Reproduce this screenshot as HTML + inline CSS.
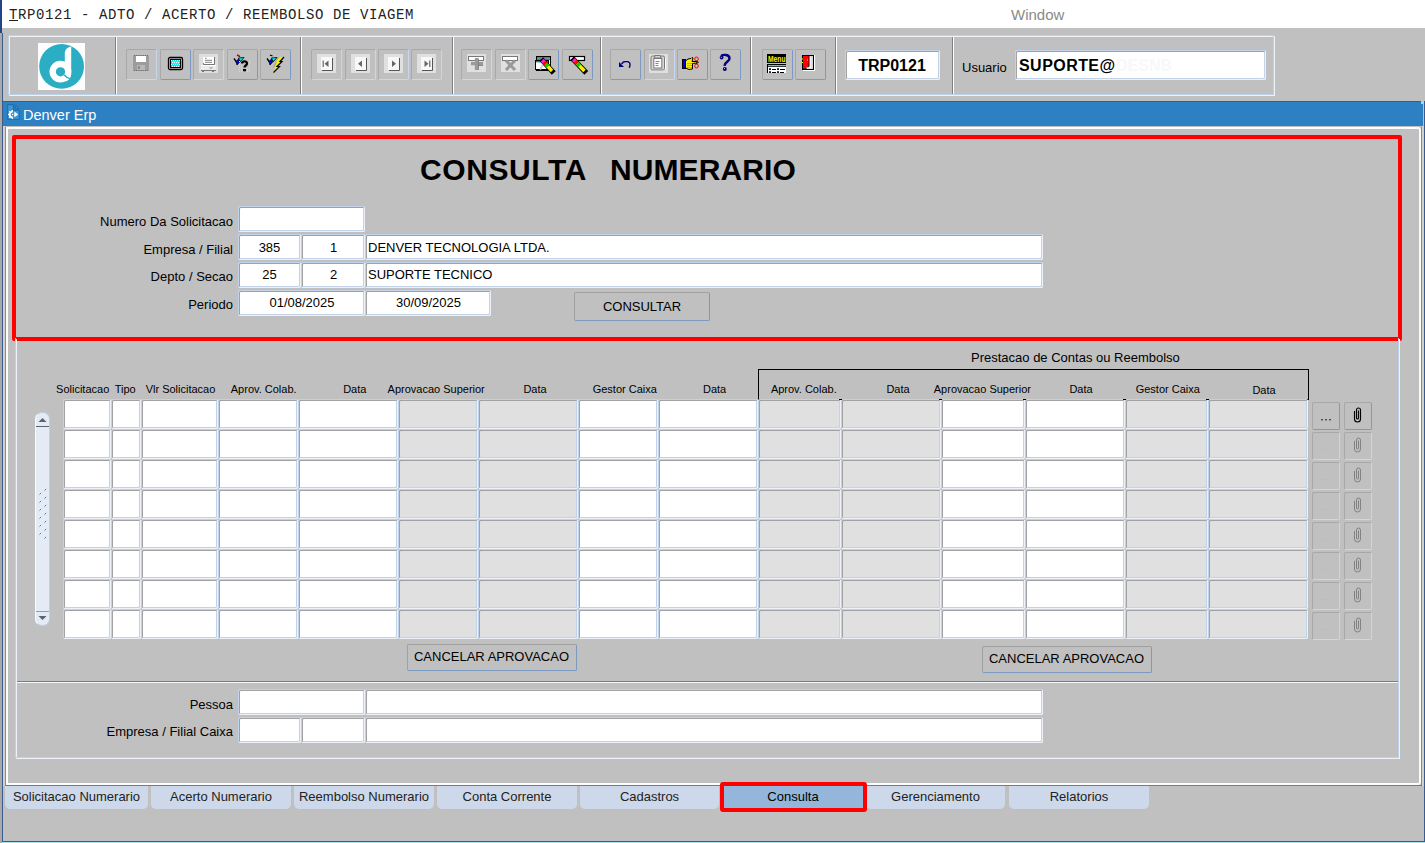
<!DOCTYPE html><html><head><meta charset="utf-8"><title>TRP0121</title><style>
*{margin:0;padding:0;box-sizing:border-box}
html,body{width:1425px;height:843px;overflow:hidden;background:#c0c0c0;position:relative}
.t{position:absolute;white-space:pre;line-height:normal}
.b{position:absolute}
.f,.fd{position:absolute;background:#fff;border:1px solid;border-color:#c2d3e9 #edf2f9 #edf2f9 #c2d3e9;border-radius:2px;box-shadow:inset 1px 1px 0 #a2a2a2, inset -1px -1px 0 #c2d3e9}
.fd{background:#e0e0e0}
.tb{position:absolute;top:49px;width:31px;height:31px;border:1px solid #a8a8a8;border-right-color:#c6d8ef;border-bottom-color:#c6d8ef;border-radius:2px}
.tb.e{border-right-color:#7a9ac2;border-bottom-color:#7a9ac2}
.tb svg{position:absolute;left:0;top:0}
.btn{position:absolute;border:1px solid #a0a0a0;border-right-color:#7a9ac2;border-bottom-color:#7a9ac2;border-radius:2px}
.tab{position:absolute;top:786px;height:23px;width:140px;background:#cdd9ea;border-radius:0 0 5px 5px;font-family:"Liberation Sans",sans-serif;font-size:13px;text-align:center;line-height:21px;color:#222}
</style></head><body>
<div class="b" style="left:2px;top:0px;width:1423px;height:28px;background:#fff"></div>
<div class="b" style="left:0px;top:0px;width:2px;height:33px;background:#1f4588"></div>
<div class="b" style="left:0px;top:33px;width:1px;height:810px;background:#c8c8c8"></div>
<div class="b" style="left:1px;top:33px;width:1px;height:810px;background:#9a9a9a"></div>
<div class="t" style="left:9px;top:7px;font-size:14px;font-weight:normal;color:#222;font-family:'Liberation Mono', monospace;letter-spacing:0.6px"><u>T</u>RP0121 - ADTO / ACERTO / REEMBOLSO DE VIAGEM</div>
<div class="t" style="left:1011px;top:6px;font-size:15px;font-weight:normal;color:#8a8a8a;font-family:'Liberation Sans', sans-serif;">Window</div>
<div class="b" style="left:9px;top:36px;width:1266px;height:60px;border:1px solid #eef3fa"></div>
<div class="b" style="left:8px;top:35px;width:1266px;height:60px;border:1px solid #bcd0ea"></div>
<div class="b" style="left:115px;top:37px;width:1px;height:57px;background:#808080"></div>
<div class="b" style="left:116px;top:37px;width:1px;height:57px;background:#fff"></div>
<div class="b" style="left:300px;top:37px;width:1px;height:57px;background:#808080"></div>
<div class="b" style="left:301px;top:37px;width:1px;height:57px;background:#fff"></div>
<div class="b" style="left:452px;top:37px;width:1px;height:57px;background:#808080"></div>
<div class="b" style="left:453px;top:37px;width:1px;height:57px;background:#fff"></div>
<div class="b" style="left:600px;top:37px;width:1px;height:57px;background:#808080"></div>
<div class="b" style="left:601px;top:37px;width:1px;height:57px;background:#fff"></div>
<div class="b" style="left:750px;top:37px;width:1px;height:57px;background:#808080"></div>
<div class="b" style="left:751px;top:37px;width:1px;height:57px;background:#fff"></div>
<div class="b" style="left:835px;top:37px;width:1px;height:57px;background:#808080"></div>
<div class="b" style="left:836px;top:37px;width:1px;height:57px;background:#fff"></div>
<div class="b" style="left:952px;top:37px;width:1px;height:57px;background:#808080"></div>
<div class="b" style="left:953px;top:37px;width:1px;height:57px;background:#fff"></div>
<svg class="b" style="left:38px;top:43px" width="47" height="47" viewBox="0 0 47 47">
<rect width="47" height="47" fill="#fdfdfd"/>
<circle cx="23.6" cy="23.4" r="22.4" fill="#2badc3"/>
<circle cx="22.4" cy="28.6" r="10.9" fill="#fff"/>
<path d="M26.8 31 V9.5 C27.5 6 30 4.2 33.2 3.6 V31 C33.2 34.5 31 37 28 38.5 L25 33 Z" fill="#fff"/>
<circle cx="22.5" cy="28.8" r="4.65" fill="#2badc3"/>
<path d="M26 31.8 C27.8 34 29.5 35 32 35.6" stroke="#2badc3" stroke-width="1.4" fill="none"/>
</svg>
<div class="tb" style="left:126px"><svg width="31" height="31" viewBox="0 0 31 31" style="left:-1px;top:-1px"><rect x="7" y="6" width="16" height="16" rx="1.5" fill="#9c9c9c"/><path d="M8 6.5h14M8 21.5h14" stroke="#666" stroke-width="1" stroke-dasharray="1 1.2"/><rect x="10" y="7" width="10" height="6" fill="#fff"/><rect x="11" y="16" width="8" height="5" fill="#b8b8b8"/><rect x="12" y="17" width="2" height="3" fill="#8a8a8a"/></svg></div>
<div class="tb e" style="left:160px"><svg width="31" height="31" viewBox="0 0 31 31" style="left:-1px;top:-1px"><rect x="8.5" y="8.5" width="14" height="12" rx="1.5" fill="#c8c8c8" stroke="#000" stroke-width="1.3"/><rect x="10.5" y="10.5" width="10" height="8" fill="#00f0f8" stroke="#000" stroke-width="1.1"/><g fill="#fff"><rect x="11" y="11" width="1" height="1"/><rect x="13" y="11" width="1" height="1"/><rect x="15" y="11" width="1" height="1"/><rect x="17" y="11" width="1" height="1"/><rect x="19" y="11" width="1" height="1"/><rect x="12" y="13" width="1" height="1"/><rect x="14" y="13" width="1" height="1"/><rect x="16" y="13" width="1" height="1"/><rect x="18" y="13" width="1" height="1"/><rect x="11" y="15" width="1" height="1"/><rect x="13" y="15" width="1" height="1"/><rect x="15" y="15" width="1" height="1"/><rect x="17" y="15" width="1" height="1"/><rect x="19" y="15" width="1" height="1"/><rect x="12" y="17" width="1" height="1"/><rect x="14" y="17" width="1" height="1"/><rect x="16" y="17" width="1" height="1"/><rect x="18" y="17" width="1" height="1"/></g><path d="M12 12.5h6M12 14.5h7" stroke="#bbb" stroke-width="0.8"/></svg></div>
<div class="tb" style="left:193px"><svg width="31" height="31" viewBox="0 0 31 31" style="left:-1px;top:-1px"><rect x="6" y="5" width="19" height="19" fill="#dedede"/><rect x="10" y="8" width="11" height="7" fill="#fff"/><path d="M10.5 14 V15.5 H21.5 V8" stroke="#777" stroke-width="1" fill="none"/><path d="M12 9.3h1.5M12 11.3h7M12 13.3h7" stroke="#777" stroke-width="0.9"/><rect x="8" y="16" width="15" height="5" fill="#ececec"/><path d="M8 16.5h15" stroke="#fff" stroke-width="1"/><path d="M16.5 19h3" stroke="#888" stroke-width="1"/><path d="M8 21.5h15" stroke="#777" stroke-width="1"/><path d="M9 22.5h2M19 22.5h2" stroke="#777" stroke-width="1"/></svg></div>
<div class="tb e" style="left:227px"><svg width="31" height="31" viewBox="0 0 31 31" style="left:-1px;top:-1px"><path d="M7 9.5 L9.5 13" stroke="#000" stroke-width="1.3"/><path d="M9 12.5 L12 9.5 L13.5 12 L10 16 Z" fill="#0000f0" stroke="#000" stroke-width="0.8"/><path d="M11.5 9 L17 8.5 L14 12 L12.8 12.3 Z" fill="#00f0f0" stroke="#000" stroke-width="0.8"/><path d="M10 6 L13 7.5" stroke="#000" stroke-width="1.3"/><circle cx="11.2" cy="6.4" r="0.9" fill="#f00"/><rect x="12" y="12" width="1" height="1" fill="#ffee00"/><rect x="12" y="14" width="1" height="1" fill="#ffee00"/><rect x="12" y="16" width="1" height="1" fill="#ffee00"/><rect x="12" y="18" width="1" height="1" fill="#ffee00"/><rect x="12" y="20" width="1" height="1" fill="#ffee00"/><rect x="12" y="22" width="1" height="1" fill="#ffee00"/><rect x="14" y="12" width="1" height="1" fill="#ffee00"/><rect x="14" y="14" width="1" height="1" fill="#ffee00"/><rect x="14" y="16" width="1" height="1" fill="#ffee00"/><rect x="14" y="18" width="1" height="1" fill="#ffee00"/><rect x="14" y="20" width="1" height="1" fill="#ffee00"/><rect x="14" y="22" width="1" height="1" fill="#ffee00"/><rect x="16" y="22" width="1" height="1" fill="#ffee00"/><rect x="18" y="22" width="1" height="1" fill="#ffee00"/><rect x="20" y="20" width="1" height="1" fill="#ffee00"/><rect x="20" y="22" width="1" height="1" fill="#ffee00"/><rect x="22" y="12" width="1" height="1" fill="#ffee00"/><rect x="22" y="14" width="1" height="1" fill="#ffee00"/><rect x="22" y="16" width="1" height="1" fill="#ffee00"/><rect x="22" y="18" width="1" height="1" fill="#ffee00"/><rect x="22" y="20" width="1" height="1" fill="#ffee00"/><rect x="22" y="22" width="1" height="1" fill="#ffee00"/><path d="M15 14.5 C15 12 20 11.5 20 14.5 C20 16.5 17.5 16.5 17.5 18.5" stroke="#000" stroke-width="2.3" fill="none"/><rect x="16" y="20" width="3" height="2.3" fill="#000"/></svg></div>
<div class="tb e" style="left:260px"><svg width="31" height="31" viewBox="0 0 31 31" style="left:-1px;top:-1px"><path d="M7 9.5 L9.5 13" stroke="#000" stroke-width="1.3"/><path d="M9 12.5 L12 9.5 L13.5 12 L10 16 Z" fill="#0000f0" stroke="#000" stroke-width="0.8"/><path d="M11.5 9 L17 8.5 L14 12 L12.8 12.3 Z" fill="#00f0f0" stroke="#000" stroke-width="0.8"/><path d="M10 6 L12.5 7" stroke="#000" stroke-width="1.3"/><path d="M19 8.5 L24 8 L20 12.5 L22 12.5 L17 17.5 L19.5 17.5 L13.5 23.5 L15.5 18.5 L13.5 18.5 L16.5 13.5 L14.5 13.5 Z" fill="#ffee00"/><path d="M24 8 L20 12.5 L22 12.5 L17 17.5 L19.5 17.5 L13.5 23.5" stroke="#000" stroke-width="1.2" fill="none"/><path d="M19 8.5 L14.5 13.5 M16.5 13.5 L13.5 18.5" stroke="#8a8aa0" stroke-width="0.8" fill="none"/></svg></div>
<div class="tb" style="left:311px"><svg width="31" height="31" viewBox="0 0 31 31" style="left:-1px;top:-1px"><rect x="6" y="5" width="19" height="19" fill="#e0e0e0"/><rect x="10" y="8" width="11" height="13" fill="#f8f8f8"/><path d="M11 21.5 H21.5 V9" stroke="#555" stroke-width="1" fill="none"/><path d="M12.2 11.5v6.5" stroke="#666" stroke-width="1.2"/><path d="M17.5 11.5 L13.5 14.7 L17.5 18 Z" fill="#666"/></svg></div>
<div class="tb" style="left:345px"><svg width="31" height="31" viewBox="0 0 31 31" style="left:-1px;top:-1px"><rect x="6" y="5" width="19" height="19" fill="#e0e0e0"/><rect x="10" y="8" width="11" height="13" fill="#f8f8f8"/><path d="M11 21.5 H21.5 V9" stroke="#555" stroke-width="1" fill="none"/><path d="M17 11.5 L13 14.7 L17 18 Z" fill="#666"/></svg></div>
<div class="tb" style="left:378px"><svg width="31" height="31" viewBox="0 0 31 31" style="left:-1px;top:-1px"><rect x="6" y="5" width="19" height="19" fill="#e0e0e0"/><rect x="10" y="8" width="11" height="13" fill="#f8f8f8"/><path d="M11 21.5 H21.5 V9" stroke="#555" stroke-width="1" fill="none"/><path d="M14 11.5 L18 14.7 L14 18 Z" fill="#666"/></svg></div>
<div class="tb" style="left:411px"><svg width="31" height="31" viewBox="0 0 31 31" style="left:-1px;top:-1px"><rect x="6" y="5" width="19" height="19" fill="#e0e0e0"/><rect x="10" y="8" width="11" height="13" fill="#f8f8f8"/><path d="M11 21.5 H21.5 V9" stroke="#555" stroke-width="1" fill="none"/><path d="M13.5 11.5 L17.5 14.7 L13.5 18 Z" fill="#666"/><path d="M18.8 11.5v6.5" stroke="#666" stroke-width="1.2"/></svg></div>
<div class="tb" style="left:461px"><svg width="31" height="31" viewBox="0 0 31 31" style="left:-1px;top:-1px"><rect x="6" y="5" width="19" height="18" fill="#e0e0e0"/><rect x="7.5" y="7.5" width="15" height="4" fill="#fff" stroke="#777" stroke-width="1"/><path d="M15.5 9 V21 M10 14.7 H22" stroke="#999" stroke-width="3.3"/><path d="M17.5 9.5 V21 M17 16.5 H22" stroke="#777" stroke-width="0.8"/></svg></div>
<div class="tb" style="left:495px"><svg width="31" height="31" viewBox="0 0 31 31" style="left:-1px;top:-1px"><rect x="6" y="5" width="19" height="18" fill="#e0e0e0"/><rect x="7.5" y="7.5" width="15" height="4" fill="#fff" stroke="#777" stroke-width="1"/><path d="M11 11.5 L20 21 M20 11.5 L11 21" stroke="#999" stroke-width="3"/></svg></div>
<div class="tb e" style="left:528px"><svg width="31" height="31" viewBox="0 0 31 31" style="left:-1px;top:-1px"><rect x="8.5" y="7.5" width="14" height="14" fill="#fff" stroke="#000" stroke-width="1"/><path d="M9 8.8h13" stroke="#008888" stroke-width="1.3"/><path d="M9 10.2h13" stroke="#000" stroke-width="0.8"/><rect x="7.5" y="11.5" width="13" height="9" fill="#fff" stroke="#000" stroke-width="1"/><path d="M8 12.7h12" stroke="#008888" stroke-width="1.3"/><path d="M12 20.5 L15 16" stroke="#d0d0d0" stroke-width="2"/><path d="M15 12 L24 22" stroke="#000" stroke-width="5.2" stroke-linecap="square"/><path d="M15 12 L24 22" stroke="#ffee00" stroke-width="3.4"/><path d="M14.3 11.2 L18 15.3" stroke="#ff0000" stroke-width="3.6"/><path d="M14.3 11.2 L16 13" stroke="#ff20f0" stroke-width="3.6"/><path d="M18 15.3 L20 17.5" stroke="#00d000" stroke-width="3.6"/></svg></div>
<div class="tb e" style="left:562px"><svg width="31" height="31" viewBox="0 0 31 31" style="left:-1px;top:-1px"><rect x="7.5" y="7.5" width="15" height="4" fill="#fff" stroke="#000" stroke-width="1.2"/><path d="M12 11 L22.5 22" stroke="#000" stroke-width="5.2" stroke-linecap="square"/><path d="M12 11 L22.5 22" stroke="#ffee00" stroke-width="3.4"/><path d="M11.5 10.5 L15.5 14.5" stroke="#ff0000" stroke-width="3.6"/><path d="M11.5 10.5 L13.2 12.2" stroke="#ff20f0" stroke-width="3.6"/><path d="M15.5 14.5 L17.7 16.8" stroke="#00d000" stroke-width="3.6"/></svg></div>
<div class="tb e" style="left:610px"><svg width="31" height="31" viewBox="0 0 31 31" style="left:-1px;top:-1px"><path d="M9 13 L9 18 L14 18 Z" fill="#000080"/><path d="M11.5 15 L13.5 13 L15.5 12.6 H18 L19.8 14 L20 16.2 L19.3 18.8" stroke="#000080" stroke-width="1.4" fill="none"/></svg></div>
<div class="tb" style="left:644px"><svg width="31" height="31" viewBox="0 0 31 31" style="left:-1px;top:-1px"><rect x="5" y="5" width="19" height="19" fill="#dfdfdf"/><path d="M9 21.5 H20 M21.5 9 V20" stroke="#fff" stroke-width="1"/><rect x="7" y="7" width="13.5" height="14" rx="1.5" fill="#d6d6d6" stroke="#777" stroke-width="1"/><rect x="9.8" y="9.5" width="8" height="9.5" fill="#fff" stroke="#777" stroke-width="1"/><path d="M11 6.5 H16 L17 8.5 L17.5 9 H10 L10.5 8.5 Z" fill="#d6d6d6" stroke="#777" stroke-width="1"/><path d="M11.5 12.5h4M11.5 14.5h3M11.5 16.5h3" stroke="#777" stroke-width="0.9"/></svg></div>
<div class="tb e" style="left:677px"><svg width="31" height="31" viewBox="0 0 31 31" style="left:-1px;top:-1px"><rect x="5.5" y="10.5" width="3" height="9" fill="#0000f0" stroke="#000" stroke-width="1"/><path d="M8.5 12 L11 10 L14 9.5 L15 8.5 L16 9 L15 12.5 L20 12.5 L20 14 L15.5 14.5 L15.5 20 L12 20.5 L8.5 19 Z" fill="#ffee00" stroke="#000" stroke-width="1"/><path d="M10 14.5h5M10 16.5h5M10 18.5h5" stroke="#a09000" stroke-width="0.6"/><ellipse cx="19.5" cy="10" rx="1.8" ry="2" fill="none" stroke="#f00" stroke-width="1"/><ellipse cx="19.5" cy="17" rx="1.8" ry="2" fill="none" stroke="#f00" stroke-width="1"/><path d="M19 12 L21.5 13.3 L19 15" stroke="#000" stroke-width="0.8" fill="none"/></svg></div>
<div class="tb e" style="left:710px"><svg width="31" height="31" viewBox="0 0 31 31" style="left:-1px;top:-1px"><circle cx="11.6" cy="8.6" r="1.9" fill="#000080"/><circle cx="11.3" cy="8.3" r="0.5" fill="#fff"/><path d="M11 7 C13 5.5 19.5 5 19.5 9.5 C19.5 12.5 15 12.5 14.5 16.8" stroke="#000080" stroke-width="2.4" fill="none"/><circle cx="14.8" cy="20" r="2" fill="#000080"/><circle cx="14.5" cy="19.6" r="0.5" fill="#fff"/></svg></div>
<div class="tb e" style="left:762px"><svg width="31" height="31" viewBox="0 0 31 31" style="left:-1px;top:-1px"><rect x="5" y="5" width="19" height="9" fill="#000"/><text x="6" y="12.6" font-family="Liberation Sans" font-weight="bold" font-size="9" fill="#ffee00" textLength="17.5" lengthAdjust="spacingAndGlyphs">Menu</text><rect x="5" y="15" width="19" height="1" fill="#000"/><rect x="6" y="16" width="18" height="1.3" fill="#00f0f0"/><rect x="5" y="17.3" width="19" height="0.9" fill="#000"/><rect x="6" y="18" width="18" height="6" fill="#fff"/><rect x="5" y="15" width="1" height="9" fill="#000"/><g fill="#000"><rect x="7" y="19.3" width="2" height="1.6"/><rect x="7" y="22.3" width="2" height="1.6"/><rect x="15" y="19.3" width="2" height="1.6"/><rect x="15" y="22.3" width="2" height="1.6"/><rect x="10" y="20" width="4" height="1"/><rect x="10" y="23" width="4" height="1"/><rect x="18" y="20" width="5" height="1"/><rect x="18" y="23" width="4" height="1"/></g></svg></div>
<div class="tb e" style="left:795px"><svg width="31" height="31" viewBox="0 0 31 31" style="left:-1px;top:-1px"><path d="M19.5 6 V21.5 H8" stroke="#fff" stroke-width="1.2" fill="none"/><rect x="7.5" y="6.5" width="11" height="14" fill="#d8d8d8" stroke="#000" stroke-width="1"/><path d="M8 7 H14 V17 L13 17 L13 18 L11 18 L11 19 L8 19 Z" fill="#ff0000"/><path d="M14 7 V17.5 H13.5 V18.5 H11.5 V19.5 H8" stroke="#000" stroke-width="0.8" fill="none"/><path d="M15.8 8 V18.8 H11.5" stroke="#fff" stroke-width="0.9" fill="none"/><rect x="12" y="10.5" width="1" height="1" fill="#ff0"/><rect x="7" y="9.5" width="1" height="1" fill="#ff0"/><rect x="7" y="13" width="1" height="1" fill="#ff0"/></svg></div>
<div class="f" style="left:845px;top:50px;width:95px;height:30px"></div>
<div class="t" style="left:845.5px;width:93px;text-align:center;top:57px;font-size:16px;font-weight:bold;color:#000;font-family:'Liberation Sans', sans-serif;">TRP0121</div>
<div class="t" style="left:962px;top:60px;font-size:13px;font-weight:normal;color:#000;font-family:'Liberation Sans', sans-serif;">Usuario</div>
<div class="f" style="left:1015px;top:50px;width:251px;height:30px"></div>
<div class="t" style="left:1019px;top:57px;font-size:16px;font-weight:bold;color:#000;font-family:'Liberation Sans', sans-serif;letter-spacing:0.45px">SUPORTE@</div>
<div class="t" style="left:1116px;top:57px;font-size:16px;font-weight:bold;color:#f8f8f8;font-family:'Liberation Sans', sans-serif;">DESNB</div>
<div class="b" style="left:3px;top:101px;width:1420px;height:1px;background:#3b5b8c"></div>
<div class="b" style="left:3px;top:102px;width:1420px;height:24px;background:#2d80c2"></div>
<div class="b" style="left:3px;top:126px;width:1419px;height:1px;background:#c0c0c0"></div>
<svg class="b" style="left:7px;top:104px" width="14" height="17" viewBox="0 0 14 17">
<path d="M0.7 0.7 H6.3 V6.3 H12.3 V15.3 H0.7 Z" fill="#3a98d8" stroke="#1f6aa6" stroke-width="1"/>
<path d="M8.3 0.9 V4.6 H11.8 Z" fill="#3a98d8" stroke="#1f6aa6" stroke-width="1"/>
<path d="M5.6 7.6 A2.9 2.9 0 0 0 5.6 13.4" stroke="#fff" stroke-width="1.8" fill="none"/>
<g stroke="#fff" stroke-width="1.3"><path d="M5.4 6 v1.4"/><path d="M2.2 7.3 l1.1 1.1"/><path d="M1 10.5 h1.5"/><path d="M2.2 13.7 l1.1 -1.1"/><path d="M5.4 15 v-1.4"/></g>
<circle cx="5.6" cy="10.5" r="0.7" fill="#fff"/>
<path d="M7.3 7.6 L11.2 10.4 L7.3 13.3 Z" fill="#fff"/>
</svg>
<div class="t" style="left:23px;top:107px;font-size:14.5px;font-weight:normal;color:#fff;font-family:'Liberation Sans', sans-serif;">Denver Erp</div>
<div class="b" style="left:0px;top:33px;width:2px;height:810px;background:#a9a9a9"></div>
<div class="b" style="left:2px;top:33px;width:1px;height:809px;background:#3b5b8c"></div>
<div class="b" style="left:3px;top:126px;width:2px;height:660px;background:#d4d0c8"></div>
<div class="b" style="left:1424px;top:101px;width:1px;height:741px;background:#3b5b8c"></div>
<div class="b" style="left:1422px;top:126px;width:2px;height:660px;background:#d4d0c8"></div>
<div class="b" style="left:2px;top:841px;width:1423px;height:1px;background:#3b5b8c"></div>
<div class="b" style="left:2px;top:842px;width:1423px;height:1px;background:#a6e6f4"></div>
<div class="b" style="left:1421px;top:101px;width:3px;height:3px;background:#8fe0f4"></div>
<div class="b" style="left:5px;top:127px;width:1px;height:659px;background:#6f8fb8"></div>
<div class="b" style="left:1421px;top:127px;width:1px;height:659px;background:#6f8fb8"></div>
<div class="b" style="left:6px;top:127px;width:1415px;height:658px;border:2px solid #fbfcfe;border-radius:0 3px 3px 0"></div>
<div class="b" style="left:5px;top:785px;width:1417px;height:1px;background:#5d7fa8"></div>
<div class="b" style="left:12px;top:135px;width:1390px;height:206px;border:4px solid #ff0000;border-radius:2px"></div>
<div class="t" style="left:420px;top:153px;font-size:30px;font-weight:bold;color:#000;font-family:'Liberation Sans', sans-serif;letter-spacing:0.6px">CONSULTA</div>
<div class="t" style="left:610px;top:153px;font-size:30px;font-weight:bold;color:#000;font-family:'Liberation Sans', sans-serif;letter-spacing:0.1px">NUMERARIO</div>
<div class="t" style="right:1192px;top:214px;font-size:13px;font-weight:normal;color:#000;font-family:'Liberation Sans', sans-serif;">Numero Da Solicitacao</div>
<div class="t" style="right:1192px;top:242px;font-size:13px;font-weight:normal;color:#000;font-family:'Liberation Sans', sans-serif;">Empresa / Filial</div>
<div class="t" style="right:1192px;top:269px;font-size:13px;font-weight:normal;color:#000;font-family:'Liberation Sans', sans-serif;">Depto / Secao</div>
<div class="t" style="right:1192px;top:297px;font-size:13px;font-weight:normal;color:#000;font-family:'Liberation Sans', sans-serif;">Periodo</div>
<div class="f" style="left:238px;top:206px;width:127px;height:26px"></div>
<div class="f" style="left:238px;top:234px;width:63px;height:26px"></div>
<div class="f" style="left:301px;top:234px;width:64px;height:26px"></div>
<div class="f" style="left:365px;top:234px;width:678px;height:26px"></div>
<div class="f" style="left:238px;top:262px;width:63px;height:26px"></div>
<div class="f" style="left:301px;top:262px;width:64px;height:26px"></div>
<div class="f" style="left:365px;top:262px;width:678px;height:26px"></div>
<div class="f" style="left:238px;top:290px;width:127px;height:26px"></div>
<div class="f" style="left:365px;top:290px;width:126px;height:26px"></div>
<div class="t" style="left:239.0px;width:61px;text-align:center;top:240px;font-size:13px;font-weight:normal;color:#000;font-family:'Liberation Sans', sans-serif;">385</div>
<div class="t" style="left:302.0px;width:63px;text-align:center;top:240px;font-size:13px;font-weight:normal;color:#000;font-family:'Liberation Sans', sans-serif;">1</div>
<div class="t" style="left:368px;top:240px;font-size:13px;font-weight:normal;color:#000;font-family:'Liberation Sans', sans-serif;">DENVER TECNOLOGIA LTDA.</div>
<div class="t" style="left:239.0px;width:61px;text-align:center;top:267px;font-size:13px;font-weight:normal;color:#000;font-family:'Liberation Sans', sans-serif;">25</div>
<div class="t" style="left:302.0px;width:63px;text-align:center;top:267px;font-size:13px;font-weight:normal;color:#000;font-family:'Liberation Sans', sans-serif;">2</div>
<div class="t" style="left:368px;top:267px;font-size:13px;font-weight:normal;color:#000;font-family:'Liberation Sans', sans-serif;">SUPORTE TECNICO</div>
<div class="t" style="left:239.0px;width:126px;text-align:center;top:295px;font-size:13px;font-weight:normal;color:#000;font-family:'Liberation Sans', sans-serif;">01/08/2025</div>
<div class="t" style="left:366.0px;width:125px;text-align:center;top:295px;font-size:13px;font-weight:normal;color:#000;font-family:'Liberation Sans', sans-serif;">30/09/2025</div>
<div class="btn" style="left:574px;top:292px;width:136px;height:29px"></div>
<div class="t" style="left:574.0px;width:136px;text-align:center;top:299px;font-size:13px;font-weight:normal;color:#000;font-family:'Liberation Sans', sans-serif;">CONSULTAR</div>
<div class="b" style="left:16px;top:339px;width:1384px;height:420px;border:1px solid #eef3fa;border-top:0"></div>
<div class="b" style="left:15px;top:338px;width:1384px;height:420px;border:1px solid #bcd0ea;border-top:0"></div>
<div class="b" style="left:17px;top:681px;width:1381px;height:1px;background:#7c7c7c"></div>
<div class="b" style="left:17px;top:682px;width:1381px;height:1px;background:#f4f7fb"></div>
<div class="t" style="left:971px;top:350px;font-size:13px;font-weight:normal;color:#000;font-family:'Liberation Sans', sans-serif;">Prestacao de Contas ou Reembolso</div>
<div class="b" style="left:758px;top:369px;width:551px;height:31px;border:1px solid #000;border-bottom:1px solid #000"></div>
<div class="t" style="left:22.700000000000003px;width:120px;text-align:center;top:383px;font-size:11px;font-weight:normal;color:#000;font-family:'Liberation Sans', sans-serif;">Solicitacao</div>
<div class="t" style="left:65.2px;width:120px;text-align:center;top:383px;font-size:11px;font-weight:normal;color:#000;font-family:'Liberation Sans', sans-serif;">Tipo</div>
<div class="t" style="left:120.5px;width:120px;text-align:center;top:383px;font-size:11px;font-weight:normal;color:#000;font-family:'Liberation Sans', sans-serif;">Vlr Solicitacao</div>
<div class="t" style="left:203.7px;width:120px;text-align:center;top:383px;font-size:11px;font-weight:normal;color:#000;font-family:'Liberation Sans', sans-serif;">Aprov. Colab.</div>
<div class="t" style="left:294.8px;width:120px;text-align:center;top:383px;font-size:11px;font-weight:normal;color:#000;font-family:'Liberation Sans', sans-serif;">Data</div>
<div class="t" style="left:376.2px;width:120px;text-align:center;top:383px;font-size:11px;font-weight:normal;color:#000;font-family:'Liberation Sans', sans-serif;">Aprovacao Superior</div>
<div class="t" style="left:475.0px;width:120px;text-align:center;top:383px;font-size:11px;font-weight:normal;color:#000;font-family:'Liberation Sans', sans-serif;">Data</div>
<div class="t" style="left:564.8px;width:120px;text-align:center;top:383px;font-size:11px;font-weight:normal;color:#000;font-family:'Liberation Sans', sans-serif;">Gestor Caixa</div>
<div class="t" style="left:654.6px;width:120px;text-align:center;top:383px;font-size:11px;font-weight:normal;color:#000;font-family:'Liberation Sans', sans-serif;">Data</div>
<div class="t" style="left:743.8px;width:120px;text-align:center;top:383px;font-size:11px;font-weight:normal;color:#000;font-family:'Liberation Sans', sans-serif;">Aprov. Colab.</div>
<div class="t" style="left:838.0px;width:120px;text-align:center;top:383px;font-size:11px;font-weight:normal;color:#000;font-family:'Liberation Sans', sans-serif;">Data</div>
<div class="t" style="left:922.4px;width:120px;text-align:center;top:383px;font-size:11px;font-weight:normal;color:#000;font-family:'Liberation Sans', sans-serif;">Aprovacao Superior</div>
<div class="t" style="left:1021.0px;width:120px;text-align:center;top:383px;font-size:11px;font-weight:normal;color:#000;font-family:'Liberation Sans', sans-serif;">Data</div>
<div class="t" style="left:1107.8px;width:120px;text-align:center;top:383px;font-size:11px;font-weight:normal;color:#000;font-family:'Liberation Sans', sans-serif;">Gestor Caixa</div>
<div class="t" style="left:1204.0px;width:120px;text-align:center;top:384px;font-size:11px;font-weight:normal;color:#000;font-family:'Liberation Sans', sans-serif;">Data</div>
<div class="f" style="left:63px;top:399px;width:48px;height:30px"></div>
<div class="f" style="left:111px;top:399px;width:30px;height:30px"></div>
<div class="f" style="left:141px;top:399px;width:77px;height:30px"></div>
<div class="f" style="left:218px;top:399px;width:80px;height:30px"></div>
<div class="f" style="left:298px;top:399px;width:100px;height:30px"></div>
<div class="fd" style="left:398px;top:399px;width:80px;height:30px"></div>
<div class="fd" style="left:478px;top:399px;width:100px;height:30px"></div>
<div class="f" style="left:578px;top:399px;width:80px;height:30px"></div>
<div class="f" style="left:658px;top:399px;width:100px;height:30px"></div>
<div class="fd" style="left:758px;top:399px;width:83px;height:30px"></div>
<div class="fd" style="left:841px;top:399px;width:100px;height:30px"></div>
<div class="f" style="left:941px;top:399px;width:84px;height:30px"></div>
<div class="f" style="left:1025px;top:399px;width:100px;height:30px"></div>
<div class="fd" style="left:1125px;top:399px;width:83px;height:30px"></div>
<div class="fd" style="left:1208px;top:399px;width:100px;height:30px"></div>
<div class="tb e" style="left:1312px;top:402px;width:28px;height:28px"></div>
<div class="tb e" style="left:1344px;top:402px;width:28px;height:28px"></div>
<svg class="b" style="left:1321px;top:419px" width="11" height="2"><rect x="0" y="0" width="2" height="1.4" fill="#5a4a3a"/><rect x="4" y="0" width="2" height="1.4" fill="#5a4a3a"/><rect x="8" y="0" width="2" height="1.4" fill="#5a4a3a"/></svg>
<svg class="b" style="left:1353px;top:407px" width="10" height="16" viewBox="0 0 10 16"><path d="M1.5 4 V12 A3 3 0 0 0 7.5 12 V3 A2 2 0 0 0 3.5 3 V11 A1 1 0 0 0 5.5 11 V3.5" fill="none" stroke="#000" stroke-width="1.15"/></svg>
<div class="f" style="left:63px;top:429px;width:48px;height:30px"></div>
<div class="f" style="left:111px;top:429px;width:30px;height:30px"></div>
<div class="f" style="left:141px;top:429px;width:77px;height:30px"></div>
<div class="f" style="left:218px;top:429px;width:80px;height:30px"></div>
<div class="f" style="left:298px;top:429px;width:100px;height:30px"></div>
<div class="fd" style="left:398px;top:429px;width:80px;height:30px"></div>
<div class="fd" style="left:478px;top:429px;width:100px;height:30px"></div>
<div class="f" style="left:578px;top:429px;width:80px;height:30px"></div>
<div class="f" style="left:658px;top:429px;width:100px;height:30px"></div>
<div class="fd" style="left:758px;top:429px;width:83px;height:30px"></div>
<div class="fd" style="left:841px;top:429px;width:100px;height:30px"></div>
<div class="f" style="left:941px;top:429px;width:84px;height:30px"></div>
<div class="f" style="left:1025px;top:429px;width:100px;height:30px"></div>
<div class="fd" style="left:1125px;top:429px;width:83px;height:30px"></div>
<div class="fd" style="left:1208px;top:429px;width:100px;height:30px"></div>
<div class="tb" style="left:1312px;top:432px;width:28px;height:28px"></div>
<div class="tb" style="left:1344px;top:432px;width:28px;height:28px"></div>
<svg class="b" style="left:1321px;top:449px" width="11" height="2"><rect x="0" y="0" width="2" height="1.4" fill="#c8b8a8"/><rect x="4" y="0" width="2" height="1.4" fill="#c8b8a8"/><rect x="8" y="0" width="2" height="1.4" fill="#c8b8a8"/></svg>
<svg class="b" style="left:1353px;top:437px" width="10" height="16" viewBox="0 0 10 16"><path d="M1.5 4 V12 A3 3 0 0 0 7.5 12 V3 A2 2 0 0 0 3.5 3 V11 A1 1 0 0 0 5.5 11 V3.5" fill="none" stroke="#7a7a7a" stroke-width="0.9"/></svg>
<div class="f" style="left:63px;top:459px;width:48px;height:30px"></div>
<div class="f" style="left:111px;top:459px;width:30px;height:30px"></div>
<div class="f" style="left:141px;top:459px;width:77px;height:30px"></div>
<div class="f" style="left:218px;top:459px;width:80px;height:30px"></div>
<div class="f" style="left:298px;top:459px;width:100px;height:30px"></div>
<div class="fd" style="left:398px;top:459px;width:80px;height:30px"></div>
<div class="fd" style="left:478px;top:459px;width:100px;height:30px"></div>
<div class="f" style="left:578px;top:459px;width:80px;height:30px"></div>
<div class="f" style="left:658px;top:459px;width:100px;height:30px"></div>
<div class="fd" style="left:758px;top:459px;width:83px;height:30px"></div>
<div class="fd" style="left:841px;top:459px;width:100px;height:30px"></div>
<div class="f" style="left:941px;top:459px;width:84px;height:30px"></div>
<div class="f" style="left:1025px;top:459px;width:100px;height:30px"></div>
<div class="fd" style="left:1125px;top:459px;width:83px;height:30px"></div>
<div class="fd" style="left:1208px;top:459px;width:100px;height:30px"></div>
<div class="tb" style="left:1312px;top:462px;width:28px;height:28px"></div>
<div class="tb" style="left:1344px;top:462px;width:28px;height:28px"></div>
<svg class="b" style="left:1321px;top:479px" width="11" height="2"><rect x="0" y="0" width="2" height="1.4" fill="#c8b8a8"/><rect x="4" y="0" width="2" height="1.4" fill="#c8b8a8"/><rect x="8" y="0" width="2" height="1.4" fill="#c8b8a8"/></svg>
<svg class="b" style="left:1353px;top:467px" width="10" height="16" viewBox="0 0 10 16"><path d="M1.5 4 V12 A3 3 0 0 0 7.5 12 V3 A2 2 0 0 0 3.5 3 V11 A1 1 0 0 0 5.5 11 V3.5" fill="none" stroke="#7a7a7a" stroke-width="0.9"/></svg>
<div class="f" style="left:63px;top:489px;width:48px;height:30px"></div>
<div class="f" style="left:111px;top:489px;width:30px;height:30px"></div>
<div class="f" style="left:141px;top:489px;width:77px;height:30px"></div>
<div class="f" style="left:218px;top:489px;width:80px;height:30px"></div>
<div class="f" style="left:298px;top:489px;width:100px;height:30px"></div>
<div class="fd" style="left:398px;top:489px;width:80px;height:30px"></div>
<div class="fd" style="left:478px;top:489px;width:100px;height:30px"></div>
<div class="f" style="left:578px;top:489px;width:80px;height:30px"></div>
<div class="f" style="left:658px;top:489px;width:100px;height:30px"></div>
<div class="fd" style="left:758px;top:489px;width:83px;height:30px"></div>
<div class="fd" style="left:841px;top:489px;width:100px;height:30px"></div>
<div class="f" style="left:941px;top:489px;width:84px;height:30px"></div>
<div class="f" style="left:1025px;top:489px;width:100px;height:30px"></div>
<div class="fd" style="left:1125px;top:489px;width:83px;height:30px"></div>
<div class="fd" style="left:1208px;top:489px;width:100px;height:30px"></div>
<div class="tb" style="left:1312px;top:492px;width:28px;height:28px"></div>
<div class="tb" style="left:1344px;top:492px;width:28px;height:28px"></div>
<svg class="b" style="left:1321px;top:509px" width="11" height="2"><rect x="0" y="0" width="2" height="1.4" fill="#c8b8a8"/><rect x="4" y="0" width="2" height="1.4" fill="#c8b8a8"/><rect x="8" y="0" width="2" height="1.4" fill="#c8b8a8"/></svg>
<svg class="b" style="left:1353px;top:497px" width="10" height="16" viewBox="0 0 10 16"><path d="M1.5 4 V12 A3 3 0 0 0 7.5 12 V3 A2 2 0 0 0 3.5 3 V11 A1 1 0 0 0 5.5 11 V3.5" fill="none" stroke="#7a7a7a" stroke-width="0.9"/></svg>
<div class="f" style="left:63px;top:519px;width:48px;height:30px"></div>
<div class="f" style="left:111px;top:519px;width:30px;height:30px"></div>
<div class="f" style="left:141px;top:519px;width:77px;height:30px"></div>
<div class="f" style="left:218px;top:519px;width:80px;height:30px"></div>
<div class="f" style="left:298px;top:519px;width:100px;height:30px"></div>
<div class="fd" style="left:398px;top:519px;width:80px;height:30px"></div>
<div class="fd" style="left:478px;top:519px;width:100px;height:30px"></div>
<div class="f" style="left:578px;top:519px;width:80px;height:30px"></div>
<div class="f" style="left:658px;top:519px;width:100px;height:30px"></div>
<div class="fd" style="left:758px;top:519px;width:83px;height:30px"></div>
<div class="fd" style="left:841px;top:519px;width:100px;height:30px"></div>
<div class="f" style="left:941px;top:519px;width:84px;height:30px"></div>
<div class="f" style="left:1025px;top:519px;width:100px;height:30px"></div>
<div class="fd" style="left:1125px;top:519px;width:83px;height:30px"></div>
<div class="fd" style="left:1208px;top:519px;width:100px;height:30px"></div>
<div class="tb" style="left:1312px;top:522px;width:28px;height:28px"></div>
<div class="tb" style="left:1344px;top:522px;width:28px;height:28px"></div>
<svg class="b" style="left:1321px;top:539px" width="11" height="2"><rect x="0" y="0" width="2" height="1.4" fill="#c8b8a8"/><rect x="4" y="0" width="2" height="1.4" fill="#c8b8a8"/><rect x="8" y="0" width="2" height="1.4" fill="#c8b8a8"/></svg>
<svg class="b" style="left:1353px;top:527px" width="10" height="16" viewBox="0 0 10 16"><path d="M1.5 4 V12 A3 3 0 0 0 7.5 12 V3 A2 2 0 0 0 3.5 3 V11 A1 1 0 0 0 5.5 11 V3.5" fill="none" stroke="#7a7a7a" stroke-width="0.9"/></svg>
<div class="f" style="left:63px;top:549px;width:48px;height:30px"></div>
<div class="f" style="left:111px;top:549px;width:30px;height:30px"></div>
<div class="f" style="left:141px;top:549px;width:77px;height:30px"></div>
<div class="f" style="left:218px;top:549px;width:80px;height:30px"></div>
<div class="f" style="left:298px;top:549px;width:100px;height:30px"></div>
<div class="fd" style="left:398px;top:549px;width:80px;height:30px"></div>
<div class="fd" style="left:478px;top:549px;width:100px;height:30px"></div>
<div class="f" style="left:578px;top:549px;width:80px;height:30px"></div>
<div class="f" style="left:658px;top:549px;width:100px;height:30px"></div>
<div class="fd" style="left:758px;top:549px;width:83px;height:30px"></div>
<div class="fd" style="left:841px;top:549px;width:100px;height:30px"></div>
<div class="f" style="left:941px;top:549px;width:84px;height:30px"></div>
<div class="f" style="left:1025px;top:549px;width:100px;height:30px"></div>
<div class="fd" style="left:1125px;top:549px;width:83px;height:30px"></div>
<div class="fd" style="left:1208px;top:549px;width:100px;height:30px"></div>
<div class="tb" style="left:1312px;top:552px;width:28px;height:28px"></div>
<div class="tb" style="left:1344px;top:552px;width:28px;height:28px"></div>
<svg class="b" style="left:1321px;top:569px" width="11" height="2"><rect x="0" y="0" width="2" height="1.4" fill="#c8b8a8"/><rect x="4" y="0" width="2" height="1.4" fill="#c8b8a8"/><rect x="8" y="0" width="2" height="1.4" fill="#c8b8a8"/></svg>
<svg class="b" style="left:1353px;top:557px" width="10" height="16" viewBox="0 0 10 16"><path d="M1.5 4 V12 A3 3 0 0 0 7.5 12 V3 A2 2 0 0 0 3.5 3 V11 A1 1 0 0 0 5.5 11 V3.5" fill="none" stroke="#7a7a7a" stroke-width="0.9"/></svg>
<div class="f" style="left:63px;top:579px;width:48px;height:30px"></div>
<div class="f" style="left:111px;top:579px;width:30px;height:30px"></div>
<div class="f" style="left:141px;top:579px;width:77px;height:30px"></div>
<div class="f" style="left:218px;top:579px;width:80px;height:30px"></div>
<div class="f" style="left:298px;top:579px;width:100px;height:30px"></div>
<div class="fd" style="left:398px;top:579px;width:80px;height:30px"></div>
<div class="fd" style="left:478px;top:579px;width:100px;height:30px"></div>
<div class="f" style="left:578px;top:579px;width:80px;height:30px"></div>
<div class="f" style="left:658px;top:579px;width:100px;height:30px"></div>
<div class="fd" style="left:758px;top:579px;width:83px;height:30px"></div>
<div class="fd" style="left:841px;top:579px;width:100px;height:30px"></div>
<div class="f" style="left:941px;top:579px;width:84px;height:30px"></div>
<div class="f" style="left:1025px;top:579px;width:100px;height:30px"></div>
<div class="fd" style="left:1125px;top:579px;width:83px;height:30px"></div>
<div class="fd" style="left:1208px;top:579px;width:100px;height:30px"></div>
<div class="tb" style="left:1312px;top:582px;width:28px;height:28px"></div>
<div class="tb" style="left:1344px;top:582px;width:28px;height:28px"></div>
<svg class="b" style="left:1321px;top:599px" width="11" height="2"><rect x="0" y="0" width="2" height="1.4" fill="#c8b8a8"/><rect x="4" y="0" width="2" height="1.4" fill="#c8b8a8"/><rect x="8" y="0" width="2" height="1.4" fill="#c8b8a8"/></svg>
<svg class="b" style="left:1353px;top:587px" width="10" height="16" viewBox="0 0 10 16"><path d="M1.5 4 V12 A3 3 0 0 0 7.5 12 V3 A2 2 0 0 0 3.5 3 V11 A1 1 0 0 0 5.5 11 V3.5" fill="none" stroke="#7a7a7a" stroke-width="0.9"/></svg>
<div class="f" style="left:63px;top:609px;width:48px;height:30px"></div>
<div class="f" style="left:111px;top:609px;width:30px;height:30px"></div>
<div class="f" style="left:141px;top:609px;width:77px;height:30px"></div>
<div class="f" style="left:218px;top:609px;width:80px;height:30px"></div>
<div class="f" style="left:298px;top:609px;width:100px;height:30px"></div>
<div class="fd" style="left:398px;top:609px;width:80px;height:30px"></div>
<div class="fd" style="left:478px;top:609px;width:100px;height:30px"></div>
<div class="f" style="left:578px;top:609px;width:80px;height:30px"></div>
<div class="f" style="left:658px;top:609px;width:100px;height:30px"></div>
<div class="fd" style="left:758px;top:609px;width:83px;height:30px"></div>
<div class="fd" style="left:841px;top:609px;width:100px;height:30px"></div>
<div class="f" style="left:941px;top:609px;width:84px;height:30px"></div>
<div class="f" style="left:1025px;top:609px;width:100px;height:30px"></div>
<div class="fd" style="left:1125px;top:609px;width:83px;height:30px"></div>
<div class="fd" style="left:1208px;top:609px;width:100px;height:30px"></div>
<div class="tb" style="left:1312px;top:612px;width:28px;height:28px"></div>
<div class="tb" style="left:1344px;top:612px;width:28px;height:28px"></div>
<svg class="b" style="left:1321px;top:629px" width="11" height="2"><rect x="0" y="0" width="2" height="1.4" fill="#c8b8a8"/><rect x="4" y="0" width="2" height="1.4" fill="#c8b8a8"/><rect x="8" y="0" width="2" height="1.4" fill="#c8b8a8"/></svg>
<svg class="b" style="left:1353px;top:617px" width="10" height="16" viewBox="0 0 10 16"><path d="M1.5 4 V12 A3 3 0 0 0 7.5 12 V3 A2 2 0 0 0 3.5 3 V11 A1 1 0 0 0 5.5 11 V3.5" fill="none" stroke="#7a7a7a" stroke-width="0.9"/></svg>
<div class="b" style="left:839px;top:399px;width:3px;height:1px;background:#000"></div>
<div class="b" style="left:939px;top:399px;width:3px;height:1px;background:#000"></div>
<div class="b" style="left:1023px;top:399px;width:3px;height:1px;background:#000"></div>
<div class="b" style="left:1123px;top:399px;width:3px;height:1px;background:#000"></div>
<div class="b" style="left:1206px;top:399px;width:3px;height:1px;background:#000"></div>
<div class="b" style="left:35px;top:412px;width:15px;height:214px;background:#e5ebf4;border:1px solid #c2cfe0;border-left-color:#f8fbff;border-radius:7px"></div>
<svg class="b" style="left:35px;top:412px" width="15" height="214" viewBox="0 0 15 214">
<path d="M3.5 10 L7.5 6 L11.5 10 Z" fill="#5a6278"/><path d="M1 14.5 H14" stroke="#5a6278" stroke-width="1"/>
<path d="M1 199.5 H14" stroke="#8aa0bc" stroke-width="1"/><path d="M3.5 204 L7.5 208 L11.5 204 Z" fill="#5a6278"/>
<g stroke="#5c7cb4" stroke-width="1" fill="none"><path d="M4.5 82.5 l1.6 -1.6" /><path d="M4.5 90.5 l1.6 -1.6" /><path d="M4.5 98.5 l1.6 -1.6" /><path d="M4.5 106.5 l1.6 -1.6" /><path d="M4.5 114.5 l1.6 -1.6" /><path d="M4.5 122.5 l1.6 -1.6" /><path d="M9.5 78.5 l1.6 -1.6" /><path d="M9.5 86.5 l1.6 -1.6" /><path d="M9.5 94.5 l1.6 -1.6" /><path d="M9.5 102.5 l1.6 -1.6" /><path d="M9.5 110.5 l1.6 -1.6" /><path d="M9.5 118.5 l1.6 -1.6" /><path d="M9.5 126.5 l1.6 -1.6" /></g>
</svg>
<div class="btn" style="left:407px;top:644px;width:170px;height:27px"></div>
<div class="t" style="left:406.5px;width:170px;text-align:center;top:649px;font-size:13px;font-weight:normal;color:#000;font-family:'Liberation Sans', sans-serif;">CANCELAR APROVACAO</div>
<div class="btn" style="left:982px;top:646px;width:170px;height:27px"></div>
<div class="t" style="left:981.5px;width:170px;text-align:center;top:651px;font-size:13px;font-weight:normal;color:#000;font-family:'Liberation Sans', sans-serif;">CANCELAR APROVACAO</div>
<div class="t" style="right:1192px;top:697px;font-size:13px;font-weight:normal;color:#000;font-family:'Liberation Sans', sans-serif;">Pessoa</div>
<div class="t" style="right:1192px;top:724px;font-size:13px;font-weight:normal;color:#000;font-family:'Liberation Sans', sans-serif;">Empresa / Filial Caixa</div>
<div class="f" style="left:238px;top:689px;width:127px;height:26px"></div>
<div class="f" style="left:365px;top:689px;width:678px;height:26px"></div>
<div class="f" style="left:238px;top:717px;width:63px;height:26px"></div>
<div class="f" style="left:301px;top:717px;width:64px;height:26px"></div>
<div class="f" style="left:365px;top:717px;width:678px;height:26px"></div>
<div class="tab" style="left:5px;width:143px">Solicitacao Numerario</div>
<div class="tab" style="left:151px;width:140px">Acerto Numerario</div>
<div class="tab" style="left:294px;width:140px">Reembolso Numerario</div>
<div class="tab" style="left:437px;width:140px">Conta Corrente</div>
<div class="tab" style="left:580px;width:139px">Cadastros</div>
<div class="tab" style="left:723px;width:140px;background:#93b6da;color:#000;border-radius:0">Consulta</div>
<div class="tab" style="left:866px;width:139px">Gerenciamento</div>
<div class="tab" style="left:1009px;width:140px">Relatorios</div>
<div class="b" style="left:720px;top:782px;width:147px;height:30px;border:4px solid #ff0000;border-radius:3px"></div>
</body></html>
